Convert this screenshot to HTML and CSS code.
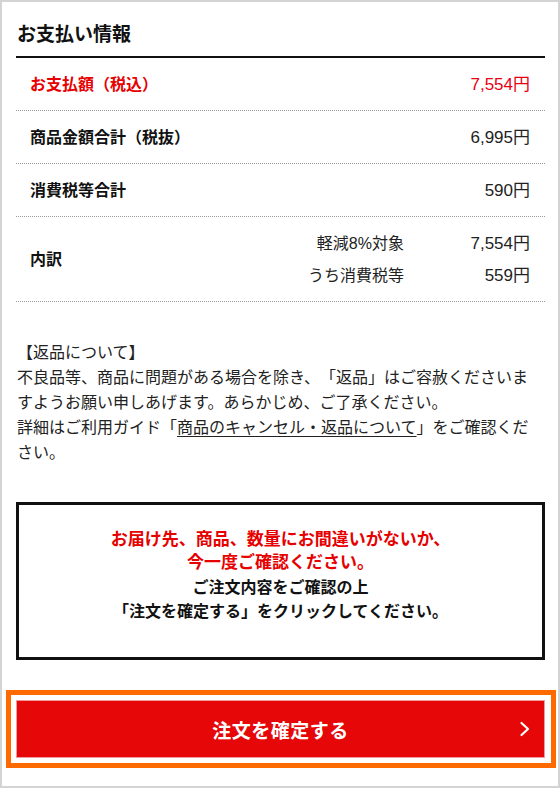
FILE: index.html
```html
<!DOCTYPE html>
<html lang="ja">
<head>
<meta charset="utf-8">
<title>お支払い情報</title>
<link rel="stylesheet" href="styles.css">
</head>
<body>
<div class="page">
  <h2 class="title">お支払い情報</h2>
  <div class="row total">
    <span class="label">お支払額（税込）</span>
    <span class="value">7,554円</span>
  </div>
  <div class="row">
    <span class="label">商品金額合計（税抜）</span>
    <span class="value">6,995円</span>
  </div>
  <div class="row">
    <span class="label">消費税等合計</span>
    <span class="value">590円</span>
  </div>
  <div class="row breakdown">
    <span class="label">内訳</span>
    <div class="sub">
      <span class="sub-label">軽減8%対象</span>
      <span class="sub-value">7,554円</span>
      <span class="sub-label">うち消費税等</span>
      <span class="sub-value">559円</span>
    </div>
  </div>

  <p class="returns">【返品について】<br>不良品等、商品に問題がある場合を除き、「返品」はご容赦くださいますようお願い申しあげます。あらかじめ、ご了承ください。<br>詳細はご利用ガイド「<a class="link" href="#">商品のキャンセル・返品について</a>」をご確認ください。</p>

  <div class="notice">
    <p class="notice-red">お届け先、商品、数量にお間違いがないか、<br>今一度ご確認ください。</p>
    <p class="notice-black">ご注文内容をご確認の上<br>「注文を確定する」をクリックしてください。</p>
  </div>

  <div class="btn-frame">
    <a class="btn" href="#">
      <span></span>
      <span class="btn-text">注文を確定する</span>
      <svg class="chev" width="12" height="18" viewBox="0 0 12 18"><polyline points="2.5,3 9,9 2.5,15" fill="none" stroke="#fff" stroke-width="2.2" stroke-linecap="round" stroke-linejoin="round"/></svg>
    </a>
  </div>
</div>
</body>
</html>
```

FILE: styles.css
```css
html, body {
  margin: 0;
  padding: 0;
  background: #fff;
}
body {
  font-family: "Liberation Sans", "Noto Sans CJK JP", sans-serif;
  color: #222;
  text-spacing-trim: space-all;
}
.page {
  width: 560px;
  height: 788px;
  box-sizing: border-box;
  border: 2px solid #d4d4d4;
  padding: 0 13px 0 14px;
  overflow: hidden;
}
.title {
  margin: 0;
  padding: 20px 0 8px 1px;
  font-size: 19px;
  line-height: 26px;
  font-weight: bold;
  color: #111;
  border-bottom: 2px solid #111;
}
.row {
  display: flex;
  justify-content: space-between;
  align-items: center;
  padding: 16px 15px 15px 14px;
  border-bottom: 1px dotted #9a9a9a;
  line-height: 21px;
}
.label {
  font-size: 16px;
  font-weight: bold;
  color: #111;
}
.value {
  font-size: 17px;
  color: #222;
}
.total .label,
.total .value {
  color: #e60012;
}
.total .label {
  color: #e60000;
}
.breakdown {
  display: grid;
  grid-template-columns: 1fr auto;
}
.sub {
  display: grid;
  grid-template-columns: auto 126px;
  row-gap: 11px;
  text-align: right;
}
.sub-label {
  font-size: 16px;
  color: #222;
}
.sub-value {
  font-size: 17px;
  color: #222;
}
.returns {
  margin: 38px 13px 0 1px;
  font-size: 16px;
  line-height: 25px;
  color: #222;
}
.link {
  color: #222;
  text-decoration: underline;
  text-underline-offset: 3px;
}
.notice {
  margin-top: 37px;
  border: 3px solid #111;
  padding: 23px 10px 33px;
  text-align: center;
  font-weight: bold;
}
.notice p {
  margin: 0;
}
.notice-red {
  font-size: 17px;
  line-height: 23px;
  color: #e60000;
}
.notice-black {
  margin-top: 2px !important;
  font-size: 16px;
  line-height: 24px;
  color: #111;
}
.btn-frame {
  margin: 30px -11px 0 -10px;
  border: 5px solid #ff6a00;
  padding: 5px 6px 5px 5px;
}
.btn {
  display: grid;
  grid-template-columns: 1fr auto 1fr;
  align-items: center;
  height: 58px;
  box-sizing: border-box;
  background: #e60808;
  border: 1px solid #f19a9a;
  text-decoration: none;
  color: #fff;
}
.btn-text {
  font-size: 19px;
  font-weight: bold;
  letter-spacing: 0.5px;
}
.chev {
  justify-self: end;
  margin-right: 13px;
  display: block;
}
```
